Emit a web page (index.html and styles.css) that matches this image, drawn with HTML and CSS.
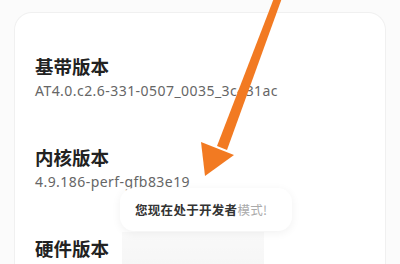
FILE: index.html
```html
<!DOCTYPE html>
<html lang="zh">
<head>
<meta charset="utf-8">
<link rel="stylesheet" href="styles.css">
</head>
<body>
<div class="card">
  <div class="item">
    <div class="title">基带版本</div>
    <div class="sub">AT4.0.c2.6-331-0507_0035_3c431ac</div>
  </div>
  <div class="item">
    <div class="title">内核版本</div>
    <div class="sub">4.9.186-perf-gfb83e19</div>
  </div>
  <div class="item last">
    <div class="title">硬件版本</div>
  </div>
</div>
<div class="shade"></div>
<div class="toast"><span class="dark">您现在处于开发者</span><span class="light">模式!</span></div>
<svg class="arrow" width="400" height="264" viewBox="0 0 400 264">
  <polygon points="274,-2 282,-2 227,150 217,146" fill="#f27a22"/>
  <polygon points="201,142 234,155 205,176" fill="#f27a22"/>
</svg>
</body>
</html>
```
FILE: styles.css
```css
html, body {
  margin: 0;
  padding: 0;
}
body {
  width: 400px;
  height: 264px;
  overflow: hidden;
  background: #fbfbfb;
  font-family: "Noto Sans CJK SC", "Noto Sans", sans-serif;
  position: relative;
}
.card {
  margin: 12px 14px 0 14px;
  background: #ffffff;
  border: 1px solid #f0f0f0;
  border-bottom: none;
  border-radius: 18px 18px 0 0;
  padding: 42px 0 0 20px;
  height: 252px;
  box-sizing: border-box;
  overflow: hidden;
}
.item {
  height: 91px;
}
.item.last {
  height: 28px;
}
.title {
  font-size: 18.5px;
  line-height: 22px;
  font-weight: 700;
  color: #222;
}
.sub {
  margin-top: 5px;
  font-family: "Noto Sans", "Open Sans", sans-serif;
  font-size: 14px;
  line-height: 18px;
  color: #666;
  letter-spacing: 0.45px;
}
.toast {
  position: absolute;
  left: 120px;
  top: 188px;
  width: 172px;
  height: 43px;
  box-sizing: border-box;
  padding-left: 15px;
  display: flex;
  align-items: center;
  background: #fff;
  border-radius: 14px;
  box-shadow: 0 2px 10px rgba(0,0,0,0.06);
  font-size: 12.5px;
  font-weight: 700;
  letter-spacing: 0.3px;
}
.dark { color: #333; }
.light { color: #aaa; font-weight: 400; }
.shade {
  position: absolute;
  left: 122px;
  top: 232px;
  width: 142px;
  height: 32px;
  background: linear-gradient(to bottom, rgba(0,0,0,0.025), rgba(0,0,0,0.035));
}
.arrow {
  position: absolute;
  left: 0;
  top: 0;
}
```
